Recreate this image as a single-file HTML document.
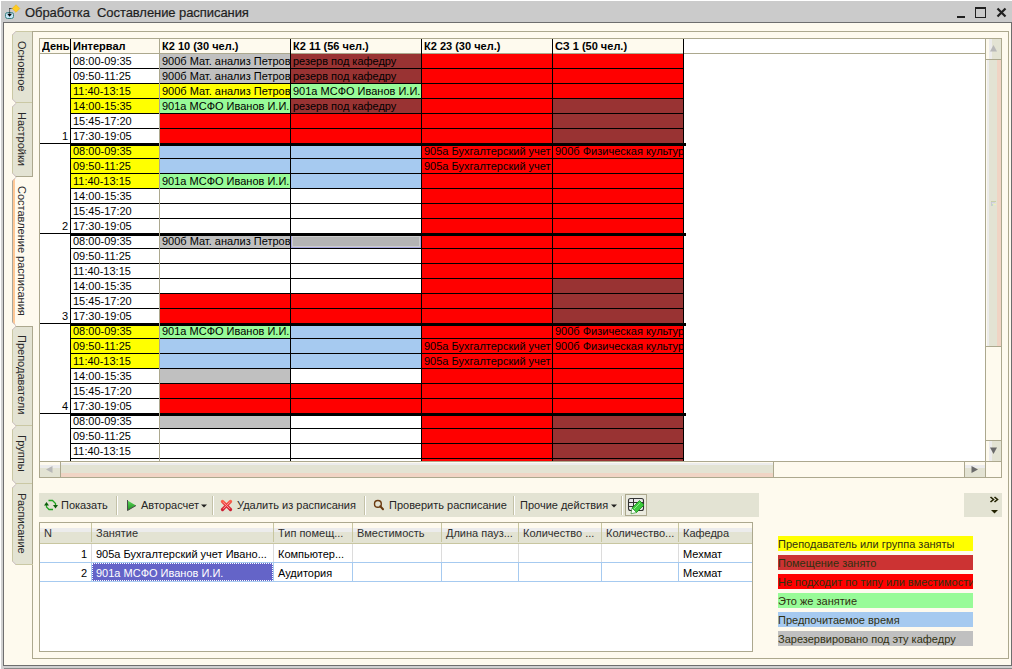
<!DOCTYPE html>
<html><head><meta charset="utf-8"><style>
html,body{margin:0;padding:0;}
body{width:1012px;height:669px;position:relative;overflow:hidden;background:#fff;font-family:"Liberation Sans",sans-serif;font-size:11px;color:#000;}
.a{position:absolute;}
.t{position:absolute;white-space:nowrap;line-height:15px;}
</style></head><body>
<div class="a" style="left:1px;top:1px;width:1011px;height:668px;background:#d0d0d0;"></div>
<div class="a" style="left:1px;top:1px;width:1011px;height:21px;background:#cbcbcb;"></div>
<div class="a" style="left:3px;top:22px;width:1009px;height:644px;background:#6e6e6e;"></div>
<div class="a" style="left:4px;top:23px;width:1007px;height:642px;background:#fefaee;"></div>
<div class="a" style="left:4px;top:668px;width:1008px;height:1px;background:#8a8a8a;"></div>
<div class="t" style="left:25px;top:5px;width:400px;height:16px;font-size:13px;color:#1e1e1e;-webkit-text-stroke:0.2px #1e1e1e;letter-spacing:-0.07px;">Обработка&nbsp; Составление расписания</div>
<div class="a" style="left:32px;top:31px;width:977px;height:628px;background:#aca88e;"></div>
<div class="a" style="left:33px;top:32px;width:975px;height:626px;background:#fefaee;"></div>
<div class="a" style="left:39px;top:38px;width:963px;height:440px;background:#aca88e;"></div>
<div class="a" style="left:40px;top:39px;width:945px;height:422px;background:#ffffff;"></div>
<div class="a" style="left:40px;top:39px;width:643px;height:14px;background:#fefaee;"></div>
<div class="a" style="left:40px;top:53px;width:945px;height:1px;background:#aca88e;"></div>
<div class="t" style="left:42px;top:39px;width:28px;height:15px;font-weight:bold;overflow:hidden;">День</div>
<div class="t" style="left:73px;top:39px;width:85px;height:15px;font-weight:bold;">Интервал</div>
<div class="t" style="left:162px;top:39px;width:128px;height:15px;font-weight:bold;">К2 10 (30 чел.)</div>
<div class="t" style="left:293px;top:39px;width:128px;height:15px;font-weight:bold;">К2 11 (56 чел.)</div>
<div class="t" style="left:424px;top:39px;width:128px;height:15px;font-weight:bold;">К2 23 (30 чел.)</div>
<div class="t" style="left:555px;top:39px;width:128px;height:15px;font-weight:bold;">СЗ 1 (50 чел.)</div>
<div class="t" style="left:73px;top:54px;width:86px;height:15px;overflow:hidden;">08:00-09:35</div>
<div class="a" style="left:160px;top:54px;width:130px;height:14px;background:#c0c0c0;"></div>
<div class="t" style="left:162px;top:54px;width:128px;height:15px;overflow:hidden;">900б Мат. анализ Петров</div>
<div class="a" style="left:291px;top:54px;width:130px;height:14px;background:#993333;"></div>
<div class="t" style="left:293px;top:54px;width:128px;height:15px;overflow:hidden;">резерв под кафедру</div>
<div class="a" style="left:422px;top:54px;width:130px;height:14px;background:#ff0000;"></div>
<div class="a" style="left:553px;top:54px;width:130px;height:14px;background:#ff0000;"></div>
<div class="a" style="left:71px;top:68px;width:612px;height:1px;background:#000;"></div>
<div class="t" style="left:73px;top:69px;width:86px;height:15px;overflow:hidden;">09:50-11:25</div>
<div class="a" style="left:160px;top:69px;width:130px;height:14px;background:#c0c0c0;"></div>
<div class="t" style="left:162px;top:69px;width:128px;height:15px;overflow:hidden;">900б Мат. анализ Петров</div>
<div class="a" style="left:291px;top:69px;width:130px;height:14px;background:#993333;"></div>
<div class="t" style="left:293px;top:69px;width:128px;height:15px;overflow:hidden;">резерв под кафедру</div>
<div class="a" style="left:422px;top:69px;width:130px;height:14px;background:#ff0000;"></div>
<div class="a" style="left:553px;top:69px;width:130px;height:14px;background:#ff0000;"></div>
<div class="a" style="left:71px;top:83px;width:612px;height:1px;background:#000;"></div>
<div class="a" style="left:71px;top:84px;width:88px;height:14px;background:#ffff00;"></div>
<div class="t" style="left:73px;top:84px;width:86px;height:15px;overflow:hidden;">11:40-13:15</div>
<div class="a" style="left:160px;top:84px;width:130px;height:14px;background:#ffff00;"></div>
<div class="t" style="left:162px;top:84px;width:128px;height:15px;overflow:hidden;">900б Мат. анализ Петров</div>
<div class="a" style="left:291px;top:84px;width:130px;height:14px;background:#98fb98;"></div>
<div class="t" style="left:293px;top:84px;width:128px;height:15px;overflow:hidden;">901а МСФО Иванов И.И.</div>
<div class="a" style="left:422px;top:84px;width:130px;height:14px;background:#ff0000;"></div>
<div class="a" style="left:553px;top:84px;width:130px;height:14px;background:#ff0000;"></div>
<div class="a" style="left:71px;top:98px;width:612px;height:1px;background:#000;"></div>
<div class="a" style="left:71px;top:99px;width:88px;height:14px;background:#ffff00;"></div>
<div class="t" style="left:73px;top:99px;width:86px;height:15px;overflow:hidden;">14:00-15:35</div>
<div class="a" style="left:160px;top:99px;width:130px;height:14px;background:#98fb98;"></div>
<div class="t" style="left:162px;top:99px;width:128px;height:15px;overflow:hidden;">901а МСФО Иванов И.И.</div>
<div class="a" style="left:291px;top:99px;width:130px;height:14px;background:#993333;"></div>
<div class="t" style="left:293px;top:99px;width:128px;height:15px;overflow:hidden;">резерв под кафедру</div>
<div class="a" style="left:422px;top:99px;width:130px;height:14px;background:#ff0000;"></div>
<div class="a" style="left:553px;top:99px;width:130px;height:14px;background:#993333;"></div>
<div class="a" style="left:71px;top:113px;width:612px;height:1px;background:#000;"></div>
<div class="t" style="left:73px;top:114px;width:86px;height:15px;overflow:hidden;">15:45-17:20</div>
<div class="a" style="left:160px;top:114px;width:130px;height:14px;background:#ff0000;"></div>
<div class="a" style="left:291px;top:114px;width:130px;height:14px;background:#ff0000;"></div>
<div class="a" style="left:422px;top:114px;width:130px;height:14px;background:#ff0000;"></div>
<div class="a" style="left:553px;top:114px;width:130px;height:14px;background:#993333;"></div>
<div class="a" style="left:71px;top:128px;width:612px;height:1px;background:#000;"></div>
<div class="t" style="left:73px;top:129px;width:86px;height:15px;overflow:hidden;">17:30-19:05</div>
<div class="a" style="left:160px;top:129px;width:130px;height:14px;background:#ff0000;"></div>
<div class="a" style="left:291px;top:129px;width:130px;height:14px;background:#ff0000;"></div>
<div class="a" style="left:422px;top:129px;width:130px;height:14px;background:#ff0000;"></div>
<div class="a" style="left:553px;top:129px;width:130px;height:14px;background:#993333;"></div>
<div class="a" style="left:71px;top:143px;width:612px;height:1px;background:#000;"></div>
<div class="t" style="left:40px;top:129px;width:28px;height:15px;text-align:right;">1</div>
<div class="a" style="left:71px;top:146px;width:88px;height:12px;background:#ffff00;"></div>
<div class="t" style="left:73px;top:144px;width:86px;height:15px;overflow:hidden;">08:00-09:35</div>
<div class="a" style="left:160px;top:146px;width:130px;height:12px;background:#a6caf0;"></div>
<div class="a" style="left:291px;top:146px;width:130px;height:12px;background:#a6caf0;"></div>
<div class="a" style="left:422px;top:146px;width:130px;height:12px;background:#ff0000;"></div>
<div class="t" style="left:424px;top:144px;width:128px;height:15px;overflow:hidden;">905а Бухгалтерский учет</div>
<div class="a" style="left:553px;top:146px;width:130px;height:12px;background:#ff0000;"></div>
<div class="t" style="left:555px;top:144px;width:128px;height:15px;overflow:hidden;">900б Физическая культура</div>
<div class="a" style="left:71px;top:158px;width:612px;height:1px;background:#000;"></div>
<div class="a" style="left:71px;top:159px;width:88px;height:14px;background:#ffff00;"></div>
<div class="t" style="left:73px;top:159px;width:86px;height:15px;overflow:hidden;">09:50-11:25</div>
<div class="a" style="left:160px;top:159px;width:130px;height:14px;background:#a6caf0;"></div>
<div class="a" style="left:291px;top:159px;width:130px;height:14px;background:#a6caf0;"></div>
<div class="a" style="left:422px;top:159px;width:130px;height:14px;background:#ff0000;"></div>
<div class="t" style="left:424px;top:159px;width:128px;height:15px;overflow:hidden;">905а Бухгалтерский учет</div>
<div class="a" style="left:553px;top:159px;width:130px;height:14px;background:#ff0000;"></div>
<div class="a" style="left:71px;top:173px;width:612px;height:1px;background:#000;"></div>
<div class="a" style="left:71px;top:174px;width:88px;height:14px;background:#ffff00;"></div>
<div class="t" style="left:73px;top:174px;width:86px;height:15px;overflow:hidden;">11:40-13:15</div>
<div class="a" style="left:160px;top:174px;width:130px;height:14px;background:#98fb98;"></div>
<div class="t" style="left:162px;top:174px;width:128px;height:15px;overflow:hidden;">901а МСФО Иванов И.И.</div>
<div class="a" style="left:291px;top:174px;width:130px;height:14px;background:#a6caf0;"></div>
<div class="a" style="left:422px;top:174px;width:130px;height:14px;background:#ff0000;"></div>
<div class="a" style="left:553px;top:174px;width:130px;height:14px;background:#ff0000;"></div>
<div class="a" style="left:71px;top:188px;width:612px;height:1px;background:#000;"></div>
<div class="t" style="left:73px;top:189px;width:86px;height:15px;overflow:hidden;">14:00-15:35</div>
<div class="a" style="left:422px;top:189px;width:130px;height:14px;background:#ff0000;"></div>
<div class="a" style="left:553px;top:189px;width:130px;height:14px;background:#ff0000;"></div>
<div class="a" style="left:71px;top:203px;width:612px;height:1px;background:#000;"></div>
<div class="t" style="left:73px;top:204px;width:86px;height:15px;overflow:hidden;">15:45-17:20</div>
<div class="a" style="left:422px;top:204px;width:130px;height:14px;background:#ff0000;"></div>
<div class="a" style="left:553px;top:204px;width:130px;height:14px;background:#ff0000;"></div>
<div class="a" style="left:71px;top:218px;width:612px;height:1px;background:#000;"></div>
<div class="t" style="left:73px;top:219px;width:86px;height:15px;overflow:hidden;">17:30-19:05</div>
<div class="a" style="left:422px;top:219px;width:130px;height:14px;background:#ff0000;"></div>
<div class="a" style="left:553px;top:219px;width:130px;height:14px;background:#ff0000;"></div>
<div class="a" style="left:71px;top:233px;width:612px;height:1px;background:#000;"></div>
<div class="t" style="left:40px;top:219px;width:28px;height:15px;text-align:right;">2</div>
<div class="a" style="left:40px;top:143px;width:30px;height:1px;background:#000;"></div>
<div class="a" style="left:71px;top:143px;width:615px;height:3px;background:#000;"></div>
<div class="t" style="left:73px;top:234px;width:86px;height:15px;overflow:hidden;">08:00-09:35</div>
<div class="a" style="left:160px;top:236px;width:130px;height:12px;background:#c0c0c0;"></div>
<div class="t" style="left:162px;top:234px;width:128px;height:15px;overflow:hidden;">900б Мат. анализ Петров</div>
<div class="a" style="left:291px;top:236px;width:130px;height:12px;background:#c0c0c0;"></div>
<div class="a" style="left:422px;top:236px;width:130px;height:12px;background:#ff0000;"></div>
<div class="a" style="left:553px;top:236px;width:130px;height:12px;background:#ff0000;"></div>
<div class="a" style="left:71px;top:248px;width:612px;height:1px;background:#000;"></div>
<div class="t" style="left:73px;top:249px;width:86px;height:15px;overflow:hidden;">09:50-11:25</div>
<div class="a" style="left:422px;top:249px;width:130px;height:14px;background:#ff0000;"></div>
<div class="a" style="left:553px;top:249px;width:130px;height:14px;background:#ff0000;"></div>
<div class="a" style="left:71px;top:263px;width:612px;height:1px;background:#000;"></div>
<div class="t" style="left:73px;top:264px;width:86px;height:15px;overflow:hidden;">11:40-13:15</div>
<div class="a" style="left:422px;top:264px;width:130px;height:14px;background:#ff0000;"></div>
<div class="a" style="left:553px;top:264px;width:130px;height:14px;background:#ff0000;"></div>
<div class="a" style="left:71px;top:278px;width:612px;height:1px;background:#000;"></div>
<div class="t" style="left:73px;top:279px;width:86px;height:15px;overflow:hidden;">14:00-15:35</div>
<div class="a" style="left:422px;top:279px;width:130px;height:14px;background:#ff0000;"></div>
<div class="a" style="left:553px;top:279px;width:130px;height:14px;background:#993333;"></div>
<div class="a" style="left:71px;top:293px;width:612px;height:1px;background:#000;"></div>
<div class="t" style="left:73px;top:294px;width:86px;height:15px;overflow:hidden;">15:45-17:20</div>
<div class="a" style="left:160px;top:294px;width:130px;height:14px;background:#ff0000;"></div>
<div class="a" style="left:291px;top:294px;width:130px;height:14px;background:#ff0000;"></div>
<div class="a" style="left:422px;top:294px;width:130px;height:14px;background:#ff0000;"></div>
<div class="a" style="left:553px;top:294px;width:130px;height:14px;background:#993333;"></div>
<div class="a" style="left:71px;top:308px;width:612px;height:1px;background:#000;"></div>
<div class="t" style="left:73px;top:309px;width:86px;height:15px;overflow:hidden;">17:30-19:05</div>
<div class="a" style="left:160px;top:309px;width:130px;height:14px;background:#ff0000;"></div>
<div class="a" style="left:291px;top:309px;width:130px;height:14px;background:#ff0000;"></div>
<div class="a" style="left:422px;top:309px;width:130px;height:14px;background:#ff0000;"></div>
<div class="a" style="left:553px;top:309px;width:130px;height:14px;background:#993333;"></div>
<div class="a" style="left:71px;top:323px;width:612px;height:1px;background:#000;"></div>
<div class="t" style="left:40px;top:309px;width:28px;height:15px;text-align:right;">3</div>
<div class="a" style="left:40px;top:233px;width:30px;height:1px;background:#000;"></div>
<div class="a" style="left:71px;top:233px;width:615px;height:3px;background:#000;"></div>
<div class="a" style="left:71px;top:326px;width:88px;height:12px;background:#ffff00;"></div>
<div class="t" style="left:73px;top:324px;width:86px;height:15px;overflow:hidden;">08:00-09:35</div>
<div class="a" style="left:160px;top:326px;width:130px;height:12px;background:#98fb98;"></div>
<div class="t" style="left:162px;top:324px;width:128px;height:15px;overflow:hidden;">901а МСФО Иванов И.И.</div>
<div class="a" style="left:291px;top:326px;width:130px;height:12px;background:#a6caf0;"></div>
<div class="a" style="left:422px;top:326px;width:130px;height:12px;background:#ff0000;"></div>
<div class="a" style="left:553px;top:326px;width:130px;height:12px;background:#ff0000;"></div>
<div class="t" style="left:555px;top:324px;width:128px;height:15px;overflow:hidden;">900б Физическая культура</div>
<div class="a" style="left:71px;top:338px;width:612px;height:1px;background:#000;"></div>
<div class="a" style="left:71px;top:339px;width:88px;height:14px;background:#ffff00;"></div>
<div class="t" style="left:73px;top:339px;width:86px;height:15px;overflow:hidden;">09:50-11:25</div>
<div class="a" style="left:160px;top:339px;width:130px;height:14px;background:#a6caf0;"></div>
<div class="a" style="left:291px;top:339px;width:130px;height:14px;background:#a6caf0;"></div>
<div class="a" style="left:422px;top:339px;width:130px;height:14px;background:#ff0000;"></div>
<div class="t" style="left:424px;top:339px;width:128px;height:15px;overflow:hidden;">905а Бухгалтерский учет</div>
<div class="a" style="left:553px;top:339px;width:130px;height:14px;background:#ff0000;"></div>
<div class="t" style="left:555px;top:339px;width:128px;height:15px;overflow:hidden;">900б Физическая культура</div>
<div class="a" style="left:71px;top:353px;width:612px;height:1px;background:#000;"></div>
<div class="a" style="left:71px;top:354px;width:88px;height:14px;background:#ffff00;"></div>
<div class="t" style="left:73px;top:354px;width:86px;height:15px;overflow:hidden;">11:40-13:15</div>
<div class="a" style="left:160px;top:354px;width:130px;height:14px;background:#a6caf0;"></div>
<div class="a" style="left:291px;top:354px;width:130px;height:14px;background:#a6caf0;"></div>
<div class="a" style="left:422px;top:354px;width:130px;height:14px;background:#ff0000;"></div>
<div class="t" style="left:424px;top:354px;width:128px;height:15px;overflow:hidden;">905а Бухгалтерский учет</div>
<div class="a" style="left:553px;top:354px;width:130px;height:14px;background:#ff0000;"></div>
<div class="a" style="left:71px;top:368px;width:612px;height:1px;background:#000;"></div>
<div class="t" style="left:73px;top:369px;width:86px;height:15px;overflow:hidden;">14:00-15:35</div>
<div class="a" style="left:160px;top:369px;width:130px;height:14px;background:#c0c0c0;"></div>
<div class="a" style="left:422px;top:369px;width:130px;height:14px;background:#ff0000;"></div>
<div class="a" style="left:553px;top:369px;width:130px;height:14px;background:#ff0000;"></div>
<div class="a" style="left:71px;top:383px;width:612px;height:1px;background:#000;"></div>
<div class="t" style="left:73px;top:384px;width:86px;height:15px;overflow:hidden;">15:45-17:20</div>
<div class="a" style="left:160px;top:384px;width:130px;height:14px;background:#ff0000;"></div>
<div class="a" style="left:291px;top:384px;width:130px;height:14px;background:#ff0000;"></div>
<div class="a" style="left:422px;top:384px;width:130px;height:14px;background:#ff0000;"></div>
<div class="a" style="left:553px;top:384px;width:130px;height:14px;background:#ff0000;"></div>
<div class="a" style="left:71px;top:398px;width:612px;height:1px;background:#000;"></div>
<div class="t" style="left:73px;top:399px;width:86px;height:15px;overflow:hidden;">17:30-19:05</div>
<div class="a" style="left:160px;top:399px;width:130px;height:14px;background:#ff0000;"></div>
<div class="a" style="left:291px;top:399px;width:130px;height:14px;background:#ff0000;"></div>
<div class="a" style="left:422px;top:399px;width:130px;height:14px;background:#ff0000;"></div>
<div class="a" style="left:553px;top:399px;width:130px;height:14px;background:#ff0000;"></div>
<div class="a" style="left:71px;top:413px;width:612px;height:1px;background:#000;"></div>
<div class="t" style="left:40px;top:399px;width:28px;height:15px;text-align:right;">4</div>
<div class="a" style="left:40px;top:323px;width:30px;height:1px;background:#000;"></div>
<div class="a" style="left:71px;top:323px;width:615px;height:3px;background:#000;"></div>
<div class="t" style="left:73px;top:414px;width:86px;height:15px;overflow:hidden;">08:00-09:35</div>
<div class="a" style="left:160px;top:416px;width:130px;height:12px;background:#c0c0c0;"></div>
<div class="a" style="left:422px;top:416px;width:130px;height:12px;background:#ff0000;"></div>
<div class="a" style="left:553px;top:416px;width:130px;height:12px;background:#993333;"></div>
<div class="a" style="left:71px;top:428px;width:612px;height:1px;background:#000;"></div>
<div class="t" style="left:73px;top:429px;width:86px;height:15px;overflow:hidden;">09:50-11:25</div>
<div class="a" style="left:422px;top:429px;width:130px;height:14px;background:#ff0000;"></div>
<div class="a" style="left:553px;top:429px;width:130px;height:14px;background:#993333;"></div>
<div class="a" style="left:71px;top:443px;width:612px;height:1px;background:#000;"></div>
<div class="t" style="left:73px;top:444px;width:86px;height:15px;overflow:hidden;">11:40-13:15</div>
<div class="a" style="left:422px;top:444px;width:130px;height:14px;background:#ff0000;"></div>
<div class="a" style="left:553px;top:444px;width:130px;height:14px;background:#993333;"></div>
<div class="a" style="left:71px;top:458px;width:612px;height:1px;background:#000;"></div>
<div class="t" style="left:73px;top:459px;width:86px;height:15px;overflow:hidden;">14:00-15:35</div>
<div class="a" style="left:422px;top:459px;width:130px;height:2px;background:#ff0000;"></div>
<div class="a" style="left:553px;top:459px;width:130px;height:2px;background:#993333;"></div>
<div class="a" style="left:40px;top:413px;width:30px;height:1px;background:#000;"></div>
<div class="a" style="left:71px;top:413px;width:615px;height:3px;background:#000;"></div>
<div class="a" style="left:291px;top:236px;width:130px;height:12px;background:#a8a8e0;"></div>
<div class="a" style="left:292px;top:236px;width:128px;height:11px;background:#cccccc;"></div>
<div class="a" style="left:293px;top:237px;width:126px;height:9px;background:#b4b4b4;"></div>
<div class="a" style="left:70px;top:39px;width:1px;height:422px;background:#000;"></div>
<div class="a" style="left:159px;top:39px;width:1px;height:422px;background:#aca88e;"></div>
<div class="a" style="left:290px;top:39px;width:1px;height:422px;background:#000;"></div>
<div class="a" style="left:421px;top:39px;width:1px;height:422px;background:#000;"></div>
<div class="a" style="left:552px;top:39px;width:1px;height:422px;background:#000;"></div>
<div class="a" style="left:683px;top:39px;width:1px;height:422px;background:#000;"></div>
<div class="a" style="left:985px;top:38px;width:1px;height:440px;background:#aca88e;"></div>
<div class="a" style="left:986px;top:39px;width:15px;height:20px;background:#e3e3d3;"></div>
<div class="a" style="left:986px;top:39px;width:3px;height:20px;background:#fefaee;"></div>
<div class="a" style="left:989px;top:39px;width:3px;height:20px;background:#ececec;"></div>
<div class="a" style="left:985px;top:59px;width:16px;height:1px;background:#aca88e;"></div>
<div class="a" style="left:986px;top:60px;width:15px;height:286px;background:#e3e3d3;"></div>
<div class="a" style="left:986px;top:60px;width:1px;height:286px;background:#fefaee;"></div>
<div class="a" style="left:987px;top:60px;width:2px;height:286px;background:#ececec;"></div>
<div class="a" style="left:997px;top:60px;width:4px;height:286px;background:#f0d4c4;"></div>
<div class="a" style="left:985px;top:346px;width:16px;height:1px;background:#aca88e;"></div>
<div class="a" style="left:986px;top:347px;width:15px;height:93px;background:#fefaee;"></div>
<div class="a" style="left:985px;top:440px;width:16px;height:1px;background:#aca88e;"></div>
<div class="a" style="left:986px;top:441px;width:15px;height:20px;background:#e3e3d3;"></div>
<div class="a" style="left:986px;top:441px;width:3px;height:20px;background:#fefaee;"></div>
<div class="a" style="left:989px;top:441px;width:3px;height:20px;background:#ececec;"></div>
<div class="a" style="left:985px;top:461px;width:16px;height:1px;background:#aca88e;"></div>
<div class="a" style="left:986px;top:462px;width:15px;height:15px;background:#fefaee;"></div>
<svg class="a" style="left:989px;top:44px" width="9" height="9"><path d="M4.5 1 L8 7.5 L1 7.5 Z" fill="#b8b8b8"/></svg>
<svg class="a" style="left:989px;top:446px" width="9" height="9"><path d="M1 1.5 L8 1.5 L4.5 8 Z" fill="#6a6a6a"/></svg>
<svg class="a" style="left:991px;top:201px" width="6" height="6"><rect x="0" y="0" width="5" height="1" fill="#c8d0a8"/><rect x="0" y="1" width="1" height="4" fill="#c8c8d8"/><rect x="1" y="1" width="3" height="1" fill="#d0d0e0"/><rect x="3" y="3" width="2" height="1" fill="#f0f0b8"/><rect x="1" y="3" width="1" height="2" fill="#c0e0c0"/></svg>
<svg class="a" style="left:415px;top:467px" width="6" height="6"><rect x="0" y="0" width="4" height="1" fill="#d0c8b8"/><rect x="0" y="1" width="1" height="4" fill="#c8c890"/><rect x="1" y="2" width="4" height="1" fill="#d0d0e0"/><rect x="3" y="3" width="1" height="2" fill="#f8f8c0"/></svg>
<div class="a" style="left:40px;top:461px;width:945px;height:1px;background:#aca88e;"></div>
<div class="a" style="left:40px;top:462px;width:20px;height:15px;background:#e3e3d3;"></div>
<div class="a" style="left:40px;top:462px;width:20px;height:3px;background:#fefaee;"></div>
<div class="a" style="left:40px;top:465px;width:20px;height:3px;background:#ececec;"></div>
<div class="a" style="left:60px;top:461px;width:1px;height:17px;background:#aca88e;"></div>
<div class="a" style="left:61px;top:462px;width:712px;height:15px;background:#e3e3d3;"></div>
<div class="a" style="left:61px;top:462px;width:712px;height:1px;background:#fefaee;"></div>
<div class="a" style="left:61px;top:463px;width:712px;height:2px;background:#ececec;"></div>
<div class="a" style="left:61px;top:473px;width:712px;height:4px;background:#f0d4c4;"></div>
<div class="a" style="left:773px;top:461px;width:1px;height:17px;background:#aca88e;"></div>
<div class="a" style="left:774px;top:462px;width:190px;height:15px;background:#fefaee;"></div>
<div class="a" style="left:964px;top:461px;width:1px;height:17px;background:#aca88e;"></div>
<div class="a" style="left:965px;top:462px;width:20px;height:15px;background:#e3e3d3;"></div>
<div class="a" style="left:965px;top:462px;width:20px;height:3px;background:#fefaee;"></div>
<div class="a" style="left:965px;top:465px;width:20px;height:3px;background:#ececec;"></div>
<svg class="a" style="left:45px;top:465px" width="9" height="9"><path d="M1 4.5 L7.5 1 L7.5 8 Z" fill="#b8b8b8"/></svg>
<svg class="a" style="left:970px;top:465px" width="9" height="9"><path d="M1.5 1 L8 4.5 L1.5 8 Z" fill="#6a6a6a"/></svg>
<div class="a" style="left:12px;top:31px;width:20px;height:72px;background:#e3e3d3;"></div>
<div class="a" style="left:12px;top:31px;width:1px;height:72px;background:#cac8a4;"></div>
<div class="a" style="left:12px;top:31px;width:20px;height:1px;background:#cac8a4;"></div>
<div class="t" style="left:14px;top:30px;width:15px;height:15px;color:#282828;writing-mode:vertical-rl;height:72px;width:15px;text-align:center;">Основное</div>
<div class="a" style="left:12px;top:102px;width:20px;height:75px;background:#e3e3d3;"></div>
<div class="a" style="left:12px;top:102px;width:1px;height:75px;background:#cac8a4;"></div>
<div class="a" style="left:12px;top:102px;width:20px;height:1px;background:#cac8a4;"></div>
<div class="t" style="left:14px;top:101px;width:15px;height:15px;color:#282828;writing-mode:vertical-rl;height:75px;width:15px;text-align:center;">Настройки</div>
<div class="a" style="left:12px;top:176px;width:21px;height:1px;background:#aca88e;"></div>
<div class="a" style="left:12px;top:177px;width:21px;height:149px;background:#fefaee;"></div>
<div class="a" style="left:12px;top:180px;width:1px;height:143px;background:#aca899;"></div>
<div class="a" style="left:13px;top:179px;width:2px;height:145px;background:#ffc896;"></div>
<div class="t" style="left:14px;top:176px;width:15px;height:15px;color:#282828;writing-mode:vertical-rl;height:149px;width:15px;text-align:center;">Составление расписания</div>
<div class="a" style="left:12px;top:326px;width:20px;height:100px;background:#e3e3d3;"></div>
<div class="a" style="left:12px;top:326px;width:1px;height:100px;background:#cac8a4;"></div>
<div class="a" style="left:12px;top:326px;width:20px;height:1px;background:#aca88e;"></div>
<div class="t" style="left:14px;top:325px;width:15px;height:15px;color:#282828;writing-mode:vertical-rl;height:100px;width:15px;text-align:center;">Преподаватели</div>
<div class="a" style="left:12px;top:425px;width:20px;height:59px;background:#e3e3d3;"></div>
<div class="a" style="left:12px;top:425px;width:1px;height:59px;background:#cac8a4;"></div>
<div class="a" style="left:12px;top:425px;width:20px;height:1px;background:#cac8a4;"></div>
<div class="t" style="left:14px;top:424px;width:15px;height:15px;color:#282828;writing-mode:vertical-rl;height:59px;width:15px;text-align:center;">Группы</div>
<div class="a" style="left:12px;top:483px;width:20px;height:82px;background:#e3e3d3;"></div>
<div class="a" style="left:12px;top:483px;width:1px;height:82px;background:#cac8a4;"></div>
<div class="a" style="left:12px;top:483px;width:20px;height:1px;background:#cac8a4;"></div>
<div class="t" style="left:14px;top:482px;width:15px;height:15px;color:#282828;writing-mode:vertical-rl;height:82px;width:15px;text-align:center;">Расписание</div>
<div class="a" style="left:12px;top:564px;width:21px;height:1px;background:#cac8a4;"></div>
<div class="a" style="left:32px;top:31px;width:1px;height:146px;background:#aca88e;"></div>
<div class="a" style="left:32px;top:177px;width:1px;height:149px;background:#fefaee;"></div>
<svg class="a" style="left:12px;top:31px" width="5" height="5"><path d="M0 0 H4 L0 4 Z" fill="#fefaee"/><path d="M0.3 4 L4 0.3" stroke="#c9bcc0" stroke-width="1"/></svg>
<svg class="a" style="left:12px;top:103px" width="5" height="5"><path d="M0 0 H4 L0 4 Z" fill="#fefaee"/><path d="M0.3 4 L4 0.3" stroke="#c9bcc0" stroke-width="1"/></svg>
<svg class="a" style="left:12px;top:177px" width="5" height="5"><path d="M0 0 H4 L0 4 Z" fill="#fefaee"/><path d="M0.3 4 L4 0.3" stroke="#c9bcc0" stroke-width="1"/></svg>
<svg class="a" style="left:12px;top:326px" width="5" height="5"><path d="M0 0 H4 L0 4 Z" fill="#fefaee"/><path d="M0.3 4 L4 0.3" stroke="#c9bcc0" stroke-width="1"/></svg>
<svg class="a" style="left:12px;top:426px" width="5" height="5"><path d="M0 0 H4 L0 4 Z" fill="#fefaee"/><path d="M0.3 4 L4 0.3" stroke="#c9bcc0" stroke-width="1"/></svg>
<svg class="a" style="left:12px;top:484px" width="5" height="5"><path d="M0 0 H4 L0 4 Z" fill="#fefaee"/><path d="M0.3 4 L4 0.3" stroke="#c9bcc0" stroke-width="1"/></svg>
<svg class="a" style="left:12px;top:98px" width="5" height="5"><path d="M0 5 H4 L0 1 Z" fill="#fefaee"/><path d="M0.3 1 L4 4.7" stroke="#c9bcc0" stroke-width="1"/></svg>
<svg class="a" style="left:12px;top:172px" width="5" height="5"><path d="M0 5 H4 L0 1 Z" fill="#fefaee"/><path d="M0.3 1 L4 4.7" stroke="#c9bcc0" stroke-width="1"/></svg>
<svg class="a" style="left:12px;top:321px" width="5" height="5"><path d="M0 5 H4 L0 1 Z" fill="#fefaee"/><path d="M0.3 1 L4 4.7" stroke="#c9bcc0" stroke-width="1"/></svg>
<svg class="a" style="left:12px;top:421px" width="5" height="5"><path d="M0 5 H4 L0 1 Z" fill="#fefaee"/><path d="M0.3 1 L4 4.7" stroke="#c9bcc0" stroke-width="1"/></svg>
<svg class="a" style="left:12px;top:479px" width="5" height="5"><path d="M0 5 H4 L0 1 Z" fill="#fefaee"/><path d="M0.3 1 L4 4.7" stroke="#c9bcc0" stroke-width="1"/></svg>
<svg class="a" style="left:12px;top:560px" width="5" height="5"><path d="M0 5 H4 L0 1 Z" fill="#fefaee"/><path d="M0.3 1 L4 4.7" stroke="#c9bcc0" stroke-width="1"/></svg>
<div class="a" style="left:39px;top:493px;width:720px;height:24px;background:#e3e3d3;"></div>
<div class="a" style="left:116px;top:496px;width:1px;height:19px;background:#c4c2a8;"></div>
<div class="a" style="left:117px;top:496px;width:1px;height:19px;background:#ffffff;"></div>
<div class="a" style="left:212px;top:496px;width:1px;height:19px;background:#c4c2a8;"></div>
<div class="a" style="left:213px;top:496px;width:1px;height:19px;background:#ffffff;"></div>
<div class="a" style="left:364px;top:496px;width:1px;height:19px;background:#c4c2a8;"></div>
<div class="a" style="left:365px;top:496px;width:1px;height:19px;background:#ffffff;"></div>
<div class="a" style="left:513px;top:496px;width:1px;height:19px;background:#c4c2a8;"></div>
<div class="a" style="left:514px;top:496px;width:1px;height:19px;background:#ffffff;"></div>
<div class="a" style="left:621px;top:496px;width:1px;height:19px;background:#c4c2a8;"></div>
<div class="a" style="left:622px;top:496px;width:1px;height:19px;background:#ffffff;"></div>
<div class="t" style="left:61px;top:498px;width:60px;height:15px;color:#262626;">Показать</div>
<div class="t" style="left:141px;top:498px;width:70px;height:15px;color:#262626;">Авторасчет</div>
<div class="t" style="left:237px;top:498px;width:130px;height:15px;color:#262626;">Удалить из расписания</div>
<div class="t" style="left:389px;top:498px;width:130px;height:15px;color:#262626;">Проверить расписание</div>
<div class="t" style="left:520px;top:498px;width:100px;height:15px;color:#262626;">Прочие действия</div>
<svg class="a" style="left:201px;top:504px" width="7" height="5"><path d="M0 0.5 H6 L3 3.5 Z" fill="#202020"/></svg>
<svg class="a" style="left:611px;top:504px" width="7" height="5"><path d="M0 0.5 H6 L3 3.5 Z" fill="#202020"/></svg>
<svg class="a" style="left:40px;top:494px" width="24" height="22" viewBox="40 494 24 22" fill="none"><path d="M48.5 500.5 H52.5 L55.5 503.5 V505" stroke="#22a522" stroke-width="1.3"/><path d="M53 505 H58 L55.5 508.5 Z" fill="#0d5e0d"/><path d="M53 509.5 H49 L46.5 507 V505" stroke="#22a522" stroke-width="1.3"/><path d="M44 505.5 H49 L46.5 502 Z" fill="#0d5e0d"/></svg>
<svg class="a" style="left:122px;top:494px" width="20" height="22" viewBox="122 494 20 22"><defs><linearGradient id="pg" x1="0" y1="0" x2="0" y2="1"><stop offset="0" stop-color="#5ad85a"/><stop offset="1" stop-color="#1e8e1e"/></linearGradient></defs><path d="M127.5 500.5 L136 505.5 L127.5 510.5 Z" fill="url(#pg)"/><path d="M127.5 500 V510.5 L136 505.5" fill="none" stroke="#4a4a4a" stroke-width="1"/></svg>
<svg class="a" style="left:216px;top:494px" width="20" height="22" viewBox="216 494 20 22"><defs><linearGradient id="xg" gradientUnits="userSpaceOnUse" x1="0" y1="500" x2="0" y2="511"><stop offset="0" stop-color="#ff6a50"/><stop offset="1" stop-color="#c81830"/></linearGradient></defs><path d="M222.5 501.5 L230.5 509.5 M230.5 501.5 L222.5 509.5" stroke="url(#xg)" stroke-width="3.2" stroke-linecap="round"/><path d="M223.5 502.5 L229.5 508.5 M229.5 502.5 L223.5 508.5" stroke="#ff8a96" stroke-width="1" stroke-linecap="round"/></svg>
<svg class="a" style="left:368px;top:494px" width="20" height="22" viewBox="368 494 20 22" fill="none"><circle cx="377.9" cy="503.9" r="3.4" stroke="#6a3a10" stroke-width="1.4"/><path d="M380.3 506.3 L383 509.2" stroke="#6a3a10" stroke-width="2" stroke-linecap="round"/></svg>
<div class="a" style="left:625px;top:494px;width:22px;height:22px;background:#aca88e;"></div>
<div class="a" style="left:626px;top:495px;width:20px;height:20px;background:#ebebdf;"></div>
<svg class="a" style="left:625px;top:494px" width="22" height="22" viewBox="625 494 22 22"><rect x="628.5" y="498.5" width="15" height="12" rx="2" fill="#e8e8e8" stroke="#333" stroke-width="1.1"/><path d="M629 502.5 H643 M629 506.5 H643 M633.5 499 V510" stroke="#333" stroke-width="1"/><path d="M639.5 500.5 L644 505 L636.5 512.5 L632 508 Z" fill="#3cc83c" stroke="#168a16" stroke-width="0.8"/><path d="M640 503 L634 509" stroke="#a0f0a0" stroke-width="0.8"/><path d="M632 508 L636.5 512.5 L631 513.8 Z" fill="#ffffff" stroke="#168a16" stroke-width="0.6"/></svg>
<div class="a" style="left:964px;top:493px;width:38px;height:24px;background:#e3e3d3;"></div>
<svg class="a" style="left:988px;top:495px" width="12" height="20"><path d="M2.5 2 L5.5 4.5 L2.5 7 M6.5 2 L9.5 4.5 L6.5 7" stroke="#222200" stroke-width="1.6" fill="none"/><path d="M3 15 H10 L6.5 18.5 Z" fill="#222200"/></svg>
<div class="a" style="left:39px;top:522px;width:714px;height:130px;background:#aca88e;"></div>
<div class="a" style="left:40px;top:523px;width:712px;height:128px;background:#ffffff;"></div>
<div class="a" style="left:40px;top:523px;width:712px;height:5px;background:#fefaee;"></div>
<div class="a" style="left:40px;top:528px;width:712px;height:4px;background:#ececec;"></div>
<div class="a" style="left:40px;top:532px;width:712px;height:11px;background:#e3e3d3;"></div>
<div class="a" style="left:40px;top:543px;width:712px;height:1px;background:#c8c6a0;"></div>
<div class="a" style="left:91px;top:523px;width:1px;height:19px;background:#c8c6a0;"></div>
<div class="a" style="left:91px;top:544px;width:1px;height:18px;background:#dcdcdc;"></div>
<div class="a" style="left:91px;top:562px;width:1px;height:19px;background:#a6caf0;"></div>
<div class="a" style="left:273px;top:523px;width:1px;height:19px;background:#c8c6a0;"></div>
<div class="a" style="left:273px;top:544px;width:1px;height:18px;background:#dcdcdc;"></div>
<div class="a" style="left:273px;top:562px;width:1px;height:19px;background:#a6caf0;"></div>
<div class="a" style="left:352px;top:523px;width:1px;height:19px;background:#c8c6a0;"></div>
<div class="a" style="left:352px;top:544px;width:1px;height:18px;background:#dcdcdc;"></div>
<div class="a" style="left:352px;top:562px;width:1px;height:19px;background:#a6caf0;"></div>
<div class="a" style="left:441px;top:523px;width:1px;height:19px;background:#c8c6a0;"></div>
<div class="a" style="left:441px;top:544px;width:1px;height:18px;background:#dcdcdc;"></div>
<div class="a" style="left:441px;top:562px;width:1px;height:19px;background:#a6caf0;"></div>
<div class="a" style="left:518px;top:523px;width:1px;height:19px;background:#c8c6a0;"></div>
<div class="a" style="left:518px;top:544px;width:1px;height:18px;background:#dcdcdc;"></div>
<div class="a" style="left:518px;top:562px;width:1px;height:19px;background:#a6caf0;"></div>
<div class="a" style="left:601px;top:523px;width:1px;height:19px;background:#c8c6a0;"></div>
<div class="a" style="left:601px;top:544px;width:1px;height:18px;background:#dcdcdc;"></div>
<div class="a" style="left:601px;top:562px;width:1px;height:19px;background:#a6caf0;"></div>
<div class="a" style="left:678px;top:523px;width:1px;height:19px;background:#c8c6a0;"></div>
<div class="a" style="left:678px;top:544px;width:1px;height:18px;background:#dcdcdc;"></div>
<div class="a" style="left:678px;top:562px;width:1px;height:19px;background:#a6caf0;"></div>
<div class="a" style="left:40px;top:562px;width:712px;height:1px;background:#a6caf0;"></div>
<div class="a" style="left:40px;top:581px;width:712px;height:1px;background:#a6caf0;"></div>
<div class="t" style="left:44px;top:526px;width:100px;height:15px;color:#303030;">N</div>
<div class="t" style="left:96px;top:526px;width:100px;height:15px;color:#303030;">Занятие</div>
<div class="t" style="left:278px;top:526px;width:100px;height:15px;color:#303030;">Тип помещ...</div>
<div class="t" style="left:357px;top:526px;width:100px;height:15px;color:#303030;">Вместимость</div>
<div class="t" style="left:446px;top:526px;width:100px;height:15px;color:#303030;">Длина пауз...</div>
<div class="t" style="left:523px;top:526px;width:100px;height:15px;color:#303030;">Количество ...</div>
<div class="t" style="left:606px;top:526px;width:100px;height:15px;color:#303030;">Количество...</div>
<div class="t" style="left:683px;top:526px;width:100px;height:15px;color:#303030;">Кафедра</div>
<div class="t" style="left:40px;top:547px;width:47px;height:15px;text-align:right;">1</div>
<div class="t" style="left:40px;top:566px;width:47px;height:15px;text-align:right;">2</div>
<div class="t" style="left:96px;top:547px;width:175px;height:15px;">905а Бухгалтерский учет Ивано...</div>
<div class="t" style="left:278px;top:547px;width:75px;height:15px;">Компьютер...</div>
<div class="t" style="left:683px;top:547px;width:70px;height:15px;">Мехмат</div>
<div class="a" style="left:92px;top:563px;width:181px;height:18px;background:#6464c8;"></div>
<div class="a" style="left:92px;top:563px;width:181px;height:18px;background:transparent;box-sizing:border-box;border:1px dotted #ffffff;"></div>
<div class="t" style="left:96px;top:566px;width:175px;height:15px;color:#ffffff;">901а МСФО Иванов И.И.</div>
<div class="t" style="left:278px;top:566px;width:75px;height:15px;">Аудитория</div>
<div class="t" style="left:683px;top:566px;width:70px;height:15px;">Мехмат</div>
<div class="a" style="left:778px;top:536px;width:195px;height:15px;background:#ffff00;"></div>
<div class="t" style="left:778px;top:537px;width:195px;height:15px;overflow:hidden;color:#303010;height:14px;">Преподаватель или группа заняты</div>
<div class="a" style="left:778px;top:555px;width:195px;height:15px;background:#cc3333;"></div>
<div class="t" style="left:778px;top:556px;width:195px;height:15px;overflow:hidden;color:#303010;height:14px;">Помещение занято</div>
<div class="a" style="left:778px;top:574px;width:195px;height:15px;background:#ff0000;"></div>
<div class="t" style="left:778px;top:575px;width:195px;height:15px;overflow:hidden;color:#303010;height:14px;">Не подходит по типу или вместимости</div>
<div class="a" style="left:778px;top:593px;width:195px;height:15px;background:#98fb98;"></div>
<div class="t" style="left:778px;top:594px;width:195px;height:15px;overflow:hidden;color:#303010;height:14px;">Это же занятие</div>
<div class="a" style="left:778px;top:612px;width:195px;height:15px;background:#a6caf0;"></div>
<div class="t" style="left:778px;top:613px;width:195px;height:15px;overflow:hidden;color:#303010;height:14px;">Предпочитаемое время</div>
<div class="a" style="left:778px;top:631px;width:195px;height:15px;background:#c0c0c0;"></div>
<div class="t" style="left:778px;top:632px;width:195px;height:15px;overflow:hidden;color:#303010;height:14px;">Зарезервировано под эту кафедру</div>
<svg class="a" style="left:4px;top:2px" width="18" height="18"><rect x="1.5" y="10.5" width="8" height="6" rx="2" fill="#c4e6f8" stroke="#3a8080" stroke-width="1"/><path d="M5.6 6.5 V12" stroke="#000" stroke-width="1" stroke-dasharray="1 1"/><path d="M5.6 6.5 H8.5" stroke="#000" stroke-width="1" stroke-dasharray="1 1"/><path d="M3.2 11.8 H8 L5.6 14.8 Z" fill="#000"/><path d="M12 2.7 L15.8 6.5 L12 10.3 L8.2 6.5 Z" fill="#ffcc22" stroke="#f0b000" stroke-width="0.5"/></svg>
<div class="a" style="left:957px;top:16px;width:8px;height:2px;background:#202020;"></div>
<div class="a" style="left:975px;top:7px;width:11px;height:11px;background:#202020;"></div>
<div class="a" style="left:976px;top:9px;width:9px;height:8px;background:#cbcbcb;"></div>
<svg class="a" style="left:995px;top:6px" width="14" height="13"><path d="M2.5 2.5 L10.5 10.5 M10.5 2.5 L2.5 10.5" stroke="#202020" stroke-width="2.2"/></svg>
</body></html>
